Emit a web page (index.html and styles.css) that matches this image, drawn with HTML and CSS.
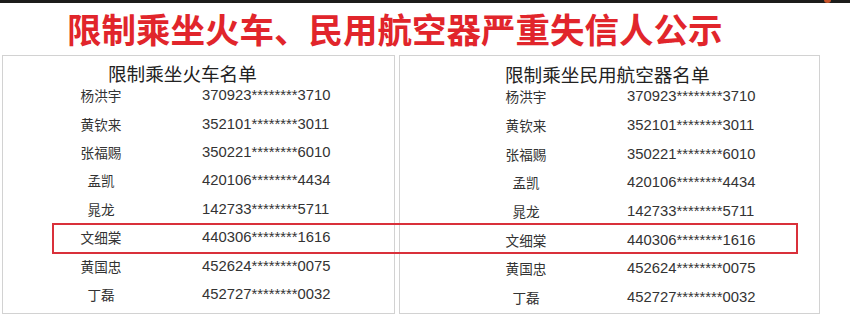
FILE: index.html
```html
<!DOCTYPE html>
<html lang="zh-CN">
<head>
<meta charset="utf-8">
<link rel="stylesheet" href="styles.css">
</head>
<body>
<div class="topbar"><span class="dot"></span></div>
<h1 class="title">限制乘坐火车、民用航空器严重失信人公示</h1>
<div class="panels">
  <section class="panel panel-left">
    <h2 class="panel-title">限制乘坐火车名单</h2>
    <div class="rows">
      <div class="name">杨洪宇</div><div class="id">370923********3710</div>
      <div class="name">黄钦来</div><div class="id">352101********3011</div>
      <div class="name">张福赐</div><div class="id">350221********6010</div>
      <div class="name">孟凯</div><div class="id">420106********4434</div>
      <div class="name">晁龙</div><div class="id">142733********5711</div>
      <div class="name">文细棠</div><div class="id">440306********1616</div>
      <div class="name">黄国忠</div><div class="id">452624********0075</div>
      <div class="name">丁磊</div><div class="id">452727********0032</div>
    </div>
  </section>
  <section class="panel panel-right">
    <h2 class="panel-title">限制乘坐民用航空器名单</h2>
    <div class="rows">
      <div class="name">杨洪宇</div><div class="id">370923********3710</div>
      <div class="name">黄钦来</div><div class="id">352101********3011</div>
      <div class="name">张福赐</div><div class="id">350221********6010</div>
      <div class="name">孟凯</div><div class="id">420106********4434</div>
      <div class="name">晁龙</div><div class="id">142733********5711</div>
      <div class="name">文细棠</div><div class="id">440306********1616</div>
      <div class="name">黄国忠</div><div class="id">452624********0075</div>
      <div class="name">丁磊</div><div class="id">452727********0032</div>
    </div>
  </section>
  <div class="highlight"></div>
</div>
</body>
</html>
```
FILE: styles.css
```css
html, body {
  margin: 0;
  padding: 0;
  background: #ffffff;
  width: 850px;
  height: 318px;
  overflow: hidden;
  font-family: "Liberation Sans", "Noto Sans CJK SC", sans-serif;
  color: #333333;
}

.topbar {
  position: relative;
  height: 3px;
  background: #1d1d1b;
}

.dot {
  position: absolute;
  left: 824px;
  top: -3px;
  width: 7px;
  height: 6px;
  border-radius: 50%;
  background: #c7532a;
}

.title {
  margin: 0;
  height: 51px;
  line-height: 51px;
  padding-left: 67px;
  font-family: "Noto Sans CJK SC", sans-serif;
  font-weight: 700;
  font-size: 34.5px;
  color: #e1252b;
  letter-spacing: 0;
  white-space: nowrap;
}

.panels {
  position: relative;
  display: flex;
  gap: 4px;
  margin-top: 1px;
  padding-left: 2px;
}

.panel {
  box-sizing: border-box;
  height: 259px;
  border: 1px solid #d2d2d2;
  padding-top: 9px;
}

.panel-left {
  width: 393px;
  --name-center: 98px;
  --id-left: 199px;
  --pitch: 28.4px;
}

.panel-right {
  width: 421px;
  --name-center: 126px;
  --id-left: 227px;
  --pitch: 28.7px;
  padding-top: 10px;
}

.panel-title {
  margin: 0;
  padding-left: 105px;
  font-family: "Noto Sans CJK SC", sans-serif;
  font-weight: 400;
  font-size: 18.6px;
  line-height: 16px;
  color: #222222;
  white-space: nowrap;
}

.rows {
  display: grid;
  grid-template-columns: 80px 1fr;
  grid-auto-rows: var(--pitch);
  align-items: center;
  padding-left: calc(var(--name-center) - 40px);
  column-gap: calc(var(--id-left) - var(--name-center) - 40px);
}

.name {
  text-align: center;
  font-family: "Noto Sans CJK SC", sans-serif;
  font-size: 13.6px;
  color: #333333;
  white-space: nowrap;
}

.id {
  font-family: "Liberation Sans", sans-serif;
  font-size: 14.8px;
  color: #333333;
  white-space: nowrap;
}

.highlight {
  position: absolute;
  left: 52px;
  top: 168px;
  width: 746px;
  height: 31px;
  box-sizing: border-box;
  border: 2px solid #d9303a;
}
```
